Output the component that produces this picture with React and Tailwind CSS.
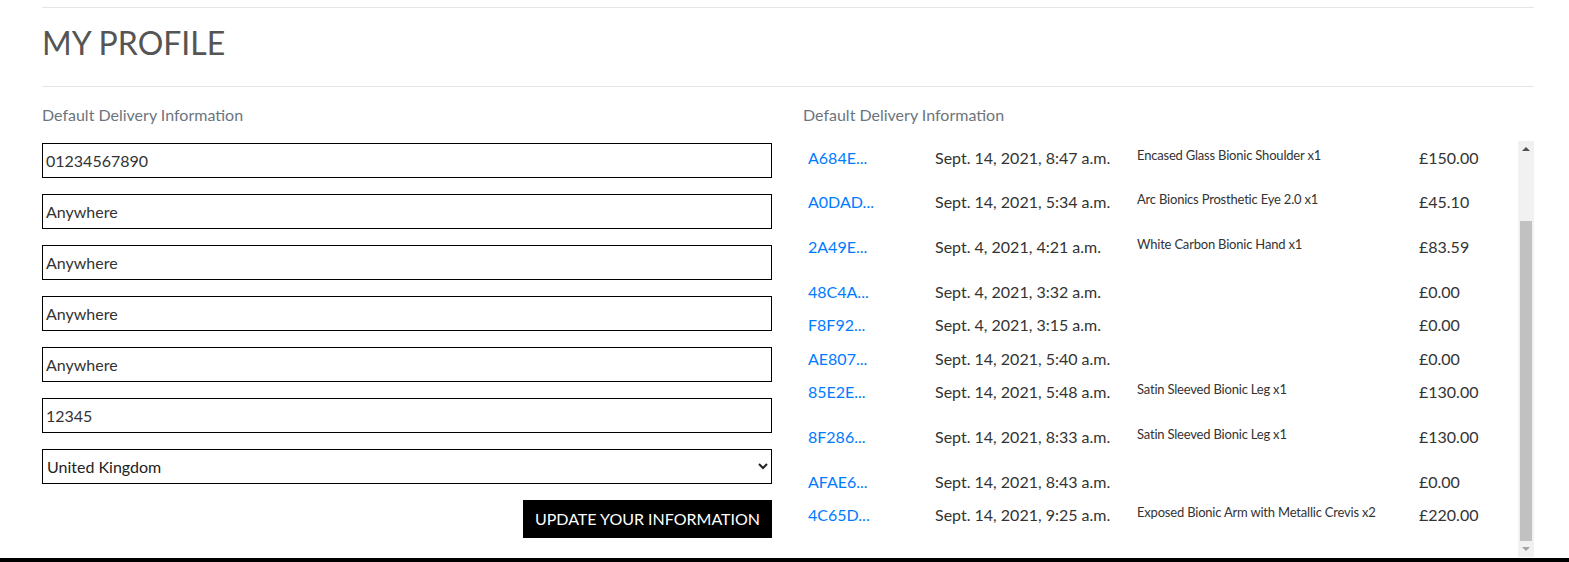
const orders = [
    { id: 'A684E...', date: 'Sept. 14, 2021, 8:47 a.m.', item: 'Encased Glass Bionic Shoulder x1', total: '£150.00' },
    { id: 'A0DAD...', date: 'Sept. 14, 2021, 5:34 a.m.', item: 'Arc Bionics Prosthetic Eye 2.0 x1', total: '£45.10' },
    { id: '2A49E...', date: 'Sept. 4, 2021, 4:21 a.m.', item: 'White Carbon Bionic Hand x1', total: '£83.59' },
    { id: '48C4A...', date: 'Sept. 4, 2021, 3:32 a.m.', item: null, total: '£0.00' },
    { id: 'F8F92...', date: 'Sept. 4, 2021, 3:15 a.m.', item: null, total: '£0.00' },
    { id: 'AE807...', date: 'Sept. 14, 2021, 5:40 a.m.', item: null, total: '£0.00' },
    { id: '85E2E...', date: 'Sept. 14, 2021, 5:48 a.m.', item: 'Satin Sleeved Bionic Leg x1', total: '£130.00' },
    { id: '8F286...', date: 'Sept. 14, 2021, 8:33 a.m.', item: 'Satin Sleeved Bionic Leg x1', total: '£130.00' },
    { id: 'AFAE6...', date: 'Sept. 14, 2021, 8:43 a.m.', item: null, total: '£0.00' },
    { id: '4C65D...', date: 'Sept. 14, 2021, 9:25 a.m.', item: 'Exposed Bionic Arm with Metallic Crevis x2', total: '£220.00' },
];

const fields = ['01234567890', 'Anywhere', 'Anywhere', 'Anywhere', 'Anywhere', '12345'];

const OrderRow = ({ order }) => (
    <div className="flex items-start py-[4.8px] text-[16px] leading-6">
        <div className="w-[127px] pl-[5px]">
            <a href="#" className="text-[#007bff]">{order.id}</a>
        </div>
        <div className="w-[202px] pl-[5px] text-[#333]">{order.date}</div>
        <div className="w-[282px] pl-[5px]">
            {order.item && (
                <p className="text-[13px] leading-[19px] mb-4 text-[#333] tracking-[-0.2px]">{order.item}</p>
            )}
        </div>
        <div className="flex-1 pl-[5px] text-[#333]">{order.total}</div>
    </div>
);

const Scrollbar = () => (
    <div className="w-[16px] h-full bg-[#f1f1f1] flex flex-col">
        <div className="h-[16px] flex items-center justify-center">
            <div className="w-0 h-0 border-l-[4px] border-r-[4px] border-b-[4px] border-l-transparent border-r-transparent border-b-[#505050]" />
        </div>
        <div className="h-[64px]" />
        <div className="flex-1 mx-[2px] bg-[#c1c1c1]" />
        <div className="h-[16px] flex items-center justify-center">
            <div className="w-0 h-0 border-l-[4px] border-r-[4px] border-t-[4px] border-l-transparent border-r-transparent border-t-[#a3a3a3]" />
        </div>
    </div>
);

export default function App() {
    return (
        <div className="bg-white font-['Lato','Liberation_Sans',sans-serif]">
            <div className="h-[558px] overflow-hidden pt-[7px] pl-[42px] pr-[35px]">
                <div className="border-t border-[#e5e5e5]" />
                <h1 className="pt-[15px] pb-[23px] text-[32px] leading-[40px] text-[#555] uppercase">My Profile</h1>
                <div className="border-t border-[#e5e5e5]" />

                <div className="flex gap-[31px] pt-[16px]">
                    {/* Delivery form */}
                    <div className="w-[730px]">
                        <p className="text-[16px] leading-6 text-[#6c757d]">Default Delivery Information</p>
                        <div className="mt-[16px] flex flex-col gap-[16px]">
                            {fields.map((value, i) => (
                                <input
                                    key={i}
                                    defaultValue={value}
                                    className="h-[35px] border border-black px-[3px] text-[16px] text-[#333] outline-none"
                                />
                            ))}
                            <select
                                defaultValue="GB"
                                className="h-[35px] border border-black px-0 text-[16px] text-[#222] outline-none"
                            >
                                <option value="GB">United Kingdom</option>
                            </select>
                        </div>
                        <div className="flex justify-end mt-[16px]">
                            <button className="h-[38px] w-[249px] bg-black text-white text-[16px] uppercase">
                                Update Your Information
                            </button>
                        </div>
                    </div>

                    {/* Order history */}
                    <div className="flex-1">
                        <p className="text-[16px] leading-6 text-[#6c757d]">Default Delivery Information</p>
                        <div className="mt-[14px] h-[416px] flex">
                            <div className="flex-1 overflow-hidden">
                                {orders.map((order) => (
                                    <OrderRow key={order.id} order={order} />
                                ))}
                            </div>
                            <Scrollbar />
                        </div>
                    </div>
                </div>
            </div>
            <footer className="h-[4px] bg-black" />
        </div>
    );
}
